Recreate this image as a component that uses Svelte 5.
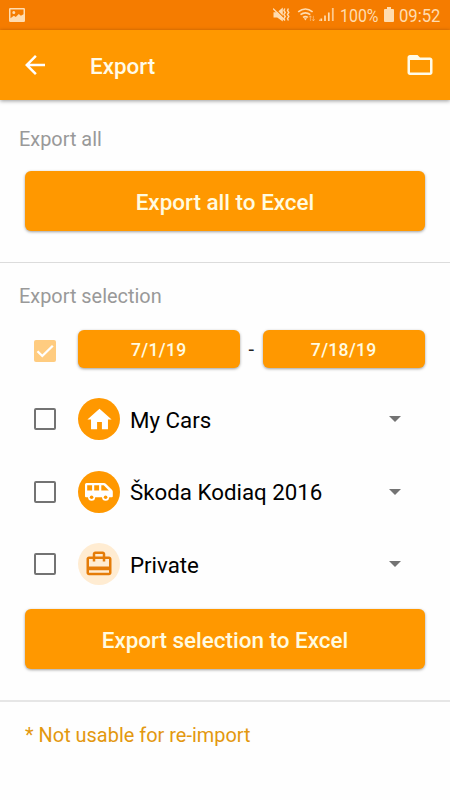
<script>
  const rows = [
    { name: 'My Cars', icon: 'home' },
    { name: 'Škoda Kodiaq 2016', icon: 'van' },
    { name: 'Private', icon: 'travel' }
  ];
</script>

<div class="screen">
  <div class="status">
    <svg class="picture" width="16" height="15" viewBox="0 0 16 15"><path fill="#ffdcb0" fill-rule="evenodd" d="M1.2 0h13.6Q16 0 16 1.2v11.6q0 1.2-1.2 1.2H1.2Q0 14 0 12.8V1.2Q0 0 1.2 0zM1.5 1.5v8.8l3.3-2.5 2 1.2 3-3 2.1 1.8 2.6-1.6V1.5zM4.8 3.1a1.5 1.5 0 1 1 0 3 1.5 1.5 0 0 1 0-3z"/></svg>
    <span class="grow"></span>
    <svg class="signals" width="66" height="18" viewBox="0 0 66 18" fill="none" stroke="#ffdcb0">
      <path d="M.5 6.2h3.7L9.8 1.6v14L4.2 11.4H.5z" fill="#ffdcb0" stroke="none"/>
      <path d="M1.2 1.8l11 11.2" stroke="#f57c00" stroke-width="1.2"/>
      <path d="M0 2.5l11.8 11.8" stroke-width="1.3"/>
      <path d="M11.8 2.5l-.9 2 1.3 2-1.3 2 1.3 2-1.3 2 .9 2M15.4 2.5l-.9 2 1.3 2-1.3 2 1.3 2-1.3 2 .9 2" stroke-width="1.4"/>
      <path d="M25.2 5.8q7.2-5.6 14.4 0M27.5 8.7q4.9-3.8 9.8 0M30 11.4q2.4-1.7 4.8 0" stroke-width="1.7"/>
      <path d="M30.8 12.3h3.2l-1.6 2.2z" fill="#ffdcb0" stroke="none"/>
      <path d="M37.4 15v-5M36 11.5l1.4-1.7 1.4 1.7M40.4 9.8v5M39 13.2l1.4 1.7 1.4-1.7" opacity=".5"/>
      <path d="M48.3 12.5V15M52 9.5V15M55.8 6.5V15" stroke-width="1.7"/>
      <path d="M59.8 2v13" stroke-width="1.8" opacity=".8"/><path d="M46 14.2h1.5"/>
    </svg>
    <span class="percent">100%</span>
    <svg class="battery" width="10" height="16" viewBox="0 0 10 16"><path fill="#ffdcb0" d="M3 0h4v2h2q1 0 1 1v11q0 1-1 1H1q-1 0-1-1V3q0-1 1-1h2z"/></svg>
    <span class="time">09:52</span>
  </div>
  <header>
    <svg width="30" height="30" viewBox="0 0 24 24"><path fill="#fff" d="M20 11H7.83l5.59-5.59L12 4l-8 8 8 8 1.41-1.41L7.83 13H20v-2z"/></svg>
    <h1>Export</h1>
    <svg width="30" height="30" viewBox="0 0 24 24"><path fill="#fffbe8" d="M20 6h-8l-2-2H4c-1.1 0-1.99.9-1.99 2L2 18c0 1.1.9 2 2 2h16c1.1 0 2-.9 2-2V8c0-1.1-.9-2-2-2zm0 12H4V8h16v10z"/></svg>
  </header>

  <section class="all">
    <h2>Export all</h2>
    <button class="wide">Export all to Excel</button>
  </section>

  <section class="selection">
    <h2>Export selection</h2>
    <div class="dates">
      <svg class="check" width="22" height="22" viewBox="0 0 22 22"><rect width="22" height="22" rx="2" fill="#ffcc80"/><path d="M3.5 11.2l4.8 4.8L18.8 5.7" fill="none" stroke="#fff" stroke-width="2.3"/></svg>
      <button class="date">7/1/19</button>
      <span class="dash">-</span>
      <button class="date">7/18/19</button>
    </div>
    {#each rows as row}
      <div class="row">
        <span class="box"></span>
        <span class="avatar" class:pale={row.icon === 'travel'}>
          {#if row.icon === 'home'}
            <svg width="29" height="29" viewBox="0 0 24 24"><path fill="#fff" d="M10 20v-6h4v6h5v-8h3L12 3 2 12h3v8z"/></svg>
          {:else if row.icon === 'van'}
            <svg width="28" height="18" viewBox="0 0 28 18"><path fill="#fff" fill-rule="evenodd" d="M1.5 0H19q1 0 1.8.8l6.1 6q.9.9.9 2v4.4q0 1-1 1H1q-1 0-1-1V1.5Q0 0 1.5 0zM2.2 2.2v5.2h4.9V2.2zM9.2 2.2v5.2h4.9V2.2zM16.3 2.2v5.2h7.6l-5.2-5.2z"/><g fill="#fff"><circle cx="6.6" cy="14.2" r="3.5"/><circle cx="20.6" cy="14.2" r="3.5"/></g><g fill="#ff9800"><circle cx="6.6" cy="14.2" r="1.8"/><circle cx="20.6" cy="14.2" r="1.8"/></g></svg>
          {:else}
            <svg width="30" height="30" viewBox="0 0 24 24"><path fill="#e57c08" d="M20 6h-3V4c0-1.11-.89-2-2-2H9c-1.11 0-2 .89-2 2v2H4c-1.11 0-2 .89-2 2v11c0 1.11.89 2 2 2h16c1.11 0 2-.89 2-2V8c0-1.11-.89-2-2-2zM9 4h6v2H9V4zm11 15H4v-2h16v2zm0-5H4V8h3v2h2V8h6v2h2V8h3v6z"/></svg>
          {/if}
        </span>
        <span class="name">{row.name}</span>
        <svg class="caret" width="12" height="6" viewBox="0 0 12 6"><path fill="#737373" d="M0 0h12L6 6z"/></svg>
      </div>
    {/each}
    <button class="wide last">Export selection to Excel</button>
  </section>

  <footer>* Not usable for re-import</footer>
</div>

<style>
  :global(body) { margin: 0; background: #fefefe; }
  .screen { width: 450px; height: 800px; overflow: hidden; background: #fefefe; font-family: Roboto, "Liberation Sans", sans-serif; display: flex; flex-direction: column; }
  .status { height: 30px; flex: none; background: #f57c00; display: flex; align-items: center; box-sizing: border-box; padding: 0 9px; }
  .status svg { flex: none; }
  .grow { flex: 1; }
  .signals { margin-right: 1px; }
  .percent, .time { color: #ffdcb0; font-size: 18.5px; line-height: 26px; padding-top: 2px; white-space: nowrap; flex: none; transform-origin: left center; }
  .percent { width: 38px; margin-right: 6px; transform: scaleX(.86); }
  .battery { margin-right: 5px; }
  .time { width: 42px; transform: scaleX(.9); }
  header { height: 70px; flex: none; box-sizing: border-box; background: #ff9800; display: flex; align-items: center; padding: 0 15px 0 20px; box-shadow: 0 1px 4px rgba(0,0,0,.4); }
  h1 { margin: 0 0 0 40px; flex: 1; font-size: 22.4px; font-weight: 500; line-height: 28px; color: #fffbe8; padding-top: 1px; }
  h2 { margin: 0; font-size: 19.9px; font-weight: 400; line-height: 24px; color: #999; padding-left: 19px; }
  section { flex: none; box-sizing: border-box; display: flex; flex-direction: column; }
  .all { height: 163px; padding-top: 28px; border-bottom: 1px solid #dcdcdc; }
  .selection { height: 439px; padding-top: 22px; border-bottom: 2px solid #e6e6e6; }
  button { border: 0; padding: 0; font-family: inherit; font-weight: 500; background: #ff9800; color: #fffbe0; border-radius: 6px; box-shadow: 0 1px 3px rgba(0,0,0,.38); }
  .wide { height: 60px; margin: 19px 25px 0; font-size: 22.45px; padding-top: 1px; }
  .dates { display: flex; margin: 21px 25px 0 34px; height: 38px; align-items: center; }
  .check { margin: 3px 21.5px 0 0; flex: none; }
  .date { flex: 1; height: 38px; font-size: 17.6px; letter-spacing: .3px; padding-top: 2px; }
  .dash { width: 22.5px; text-align: center; font-size: 20px; color: #222; }
  .row { height: 72.5px; display: flex; align-items: center; padding: 0 49px 0 34px; }
  .dates + .row { margin-top: 15px; }
  .box { width: 22px; height: 22px; box-sizing: border-box; border: 2px solid #737373; border-radius: 2px; margin-right: 22px; }
  .avatar { width: 42px; height: 42px; border-radius: 50%; background: #ff9800; display: flex; align-items: center; justify-content: center; margin-right: 10px; }
  .pale { background: #ffecd2; }
  .name { flex: 1; font-size: 22.3px; line-height: 28px; color: #000; padding-top: 1px; white-space: nowrap; }
  .last { margin-top: 8.5px; flex: none; padding-top: 2px; }
  footer { padding: 21px 0 0 25px; font-size: 19.95px; line-height: 24px; color: #e3980f; }
</style>
